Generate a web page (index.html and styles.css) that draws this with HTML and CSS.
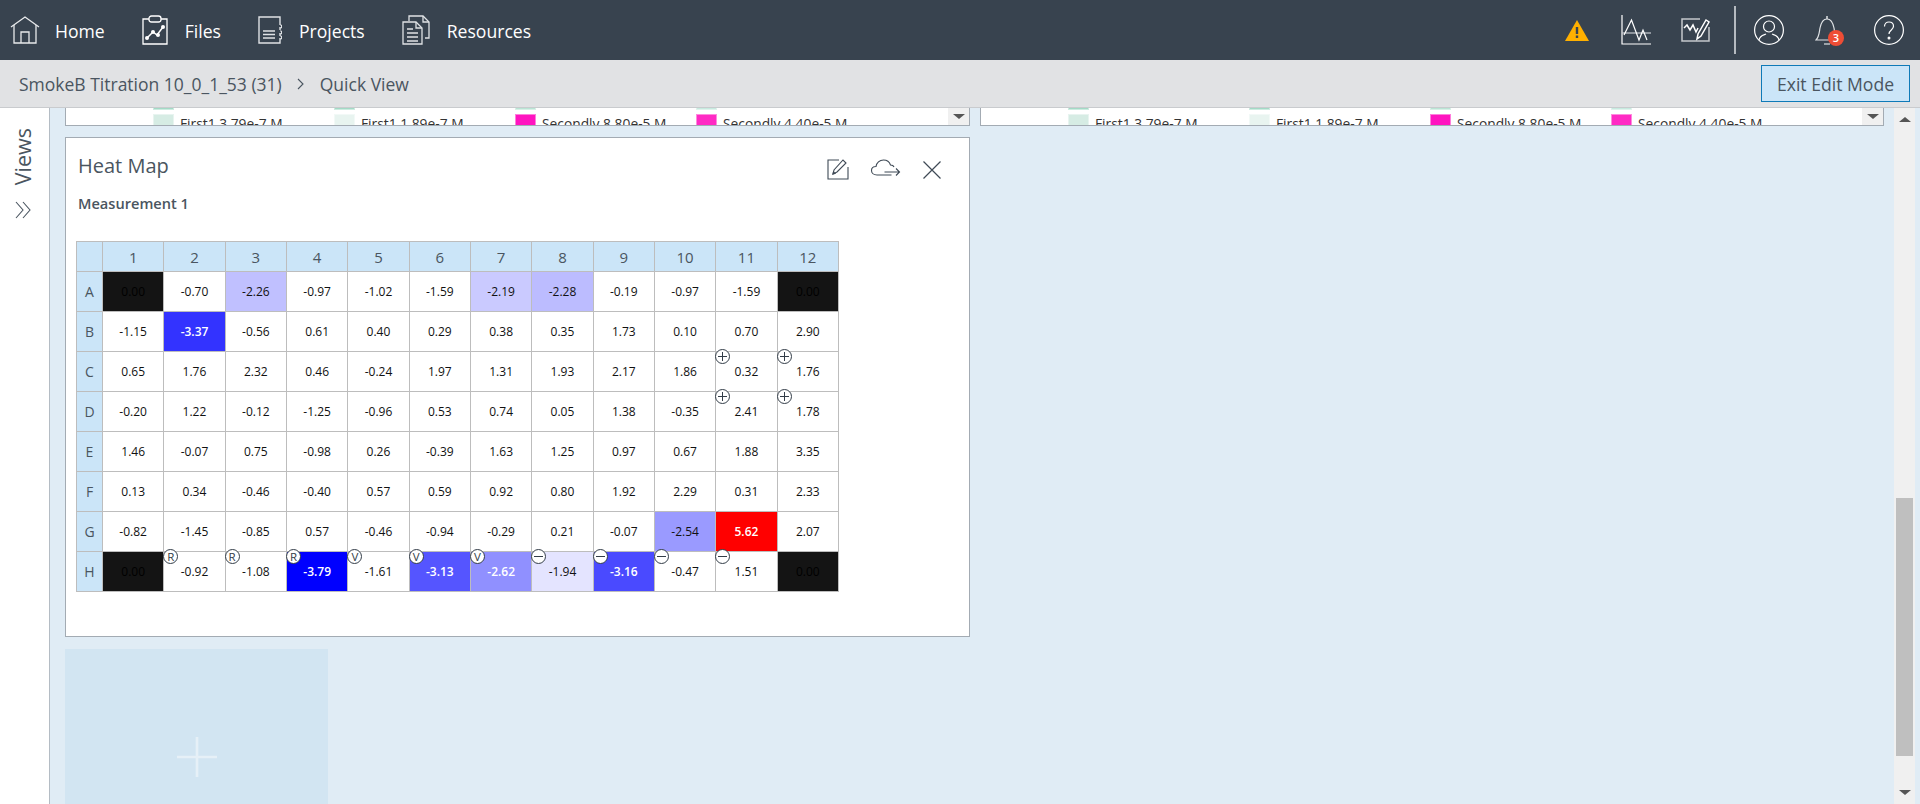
FILE: index.html
```html
<!DOCTYPE html>
<html lang="en">
<head>
<meta charset="utf-8">
<title>Quick View</title>
<link rel="stylesheet" href="styles.css">
</head>
<body>
<div class="app">
  <header class="topbar">
    <nav class="nav">
      <a class="nav-item">
        <svg class="ic-home" viewBox="0 0 30 28" fill="none" stroke="#e8eaec" stroke-width="1.3"><path d="M1 11 15 1l14 10"/><path d="M4 9v18h22V9"/><path d="M11 27V16h8v11"/></svg>
        <span>Home</span>
      </a>
      <a class="nav-item">
        <svg class="ic-files" viewBox="0 0 26 30" fill="none" stroke="#fff" stroke-width="1.3"><path d="M7 4H1v25h24V4h-6"/><rect x="7" y="1" width="12" height="6" rx="2.5"/><path d="M5 23l6-6 4 3 6-8" stroke-width="1.5"/><g fill="#fff" stroke="none"><circle cx="5" cy="23" r="2"/><circle cx="11" cy="17" r="2"/><circle cx="16" cy="20" r="2"/><circle cx="21" cy="12" r="2"/></g></svg>
        <span>Files</span>
      </a>
      <a class="nav-item">
        <svg class="ic-proj" viewBox="0 0 24 28" fill="none" stroke="#dfe2e5" stroke-width="1.4"><path d="M22 9V1H1v26h21v-5"/><path d="M22 11v3M22 17v3"/><path d="M5 15h12M5 18.500h12M5 22h12"/><path d="M22 9h1.500v3H22M22 15h1.500v3H22M22 20h1.500v3H22" stroke-width="1"/></svg>
        <span>Projects</span>
      </a>
      <a class="nav-item">
        <svg class="ic-res" viewBox="0 0 28 30" fill="none" stroke="#dfe2e5" stroke-width="1.3"><path d="M1 7h13l6 6v16H1z"/><path d="M14 7v6h6"/><path d="M7 6V1h14l6 6v16h-4"/><path d="M21 1v6h6"/><path d="M5 14h6M5 18h11M5 22h11M5 26h11"/></svg>
        <span>Resources</span>
      </a>
    </nav>
    <div class="tools">
      <svg class="ic-warn" viewBox="0 0 24 21"><path d="M12 0 24 21H0z" fill="#ffb000"/><rect x="10.800" y="7" width="2.400" height="7" fill="#38434f"/><rect x="10.800" y="15.500" width="2.400" height="2.500" fill="#38434f"/></svg>
      <svg class="ic-chart" viewBox="0 0 30 30" fill="none" stroke="#fff" stroke-width="1.2"><path d="M1 0v29h29"/><path d="M1 18h29" stroke="#c8ccd0"/><path d="M3 20 10.500 5 18 25l4-10 4 10"/></svg>
      <svg class="ic-edit-chart" viewBox="0 0 29 24" fill="none" stroke="#fff" stroke-width="1.200"><path d="M19 1H1v22h27V9" stroke="#c4c8cc" stroke-width="1.500"/><path d="M3 10l3-3 3 5 3-5 3 7 2-4" stroke-width="1.500"/><path d="M16 21l1-5 8-14 3 2-8 14z" fill="#38434f" stroke-width="1.500"/></svg>
      <span class="divider"></span>
      <svg class="ic-round" viewBox="0 0 30 30" fill="none" stroke="#fff" stroke-width="1.200"><circle cx="15" cy="15" r="14.400"/><circle cx="15" cy="11.500" r="5.500"/><path d="M5 25c1-5 5-5 7-6M25 25c-1-5-5-5-7-6"/></svg>
      <span class="bell">
        <svg class="ic-bell" viewBox="0 0 24 30" fill="none" stroke="#dfe2e5" stroke-width="1.200"><path d="M1 25c3-3 3-6 4-12 1-5 3-9 7-9s6 4 7 9c1 6 1 9 4 12z"/><path d="M12 1v3" stroke-width="1.500"/><path d="M9 29h6"/></svg>
        <span class="bell-badge">3</span>
      </span>
      <svg class="ic-round" viewBox="0 0 30 30" fill="none" stroke="#fff" stroke-width="1.200"><circle cx="15" cy="15" r="14.400"/><path d="M10.500 11.500c0-3 2-4.500 4.500-4.500s4.500 1.500 4.500 4.300c0 3.700-4.500 3.700-4.500 7.700"/><circle cx="15" cy="23" r=".9" fill="#fff"/></svg>
    </div>
  </header>

  <div class="crumbbar">
    <div class="crumbs">
      <span>SmokeB Titration 10_0_1_53 (31)</span>
      <svg class="crumb-sep" viewBox="0 0 7 12" fill="none" stroke="#4a5560" stroke-width="1.100"><path d="M1 1l5 5-5 5"/></svg>
      <span>Quick View</span>
    </div>
    <button class="exit-btn">Exit Edit Mode</button>
  </div>

  <div class="body">
    <aside class="side">
      <span class="side-title">Views</span>
      <svg class="side-chev" viewBox="0 0 16 18" fill="none" stroke="#4a5560" stroke-width="1.100"><path d="M1 1l7 8-7 8M8 1l7 8-7 8"/></svg>
    </aside>

    <main class="content">
      <div class="row-top">
        <section class="legend-card">
          <div class="legend">
            <i class="sw s1"></i><i class="sw s1"></i><i class="sw s2"></i><i class="sw s3"></i>
            <div class="lg"><i class="sw s4"></i><span>First1 3.79e-7 M</span></div>
            <div class="lg"><i class="sw s5"></i><span>First1 1.89e-7 M</span></div>
            <div class="lg"><i class="sw s6"></i><span>Secondly 8.80e-5 M</span></div>
            <div class="lg"><i class="sw s7"></i><span>Secondly 4.40e-5 M</span></div>
          </div>
          <span class="legend-arrow"><i class="tri-down"></i></span>
        </section>
        <section class="legend-card">
          <div class="legend">
            <i class="sw s1"></i><i class="sw s1"></i><i class="sw s2"></i><i class="sw s3"></i>
            <div class="lg"><i class="sw s4"></i><span>First1 3.79e-7 M</span></div>
            <div class="lg"><i class="sw s5"></i><span>First1 1.89e-7 M</span></div>
            <div class="lg"><i class="sw s6"></i><span>Secondly 8.80e-5 M</span></div>
            <div class="lg"><i class="sw s7"></i><span>Secondly 4.40e-5 M</span></div>
          </div>
          <span class="legend-arrow"><i class="tri-down"></i></span>
        </section>
      </div>

      <section class="heat-card">
        <div class="heat-head">
          <h2>Heat Map</h2>
          <div class="heat-tools">
            <svg class="ic-edit" viewBox="0 0 22 22" fill="none" stroke="#3f4a56" stroke-width="1.100"><path d="M12 2H1v19h20V9"/><path d="M6 16l1-4L16 2l3 3-9 9z"/><path d="M6 16l2-.500-1.500-1.500z" fill="#3f4a56"/></svg>
            <svg class="ic-cloud" viewBox="0 0 30 18" fill="none" stroke="#3f4a56" stroke-width="1.100"><path d="M21 16H6.500C3 16 1 14 1 11.500S3 7.500 5.500 7.500C6 4 9 1 13 1c3.500 0 6 2 7 5 1.500 0 3 .5 3.500 2"/><path d="M14 13h15M25.500 9.500 29 13l-3.500 3.500"/></svg>
            <svg class="ic-close" viewBox="0 0 18 18" fill="none" stroke="#3f4a56" stroke-width="1.200"><path d="M.5.5l17 17M17.500.5l-17 17"/></svg>
          </div>
        </div>
        <div class="heat-sub">Measurement 1</div>
        <table class="plate">
          <colgroup><col class="c-label"><col span="12"></colgroup>
          <thead>
            <tr><th></th><th>1</th><th>2</th><th>3</th><th>4</th><th>5</th><th>6</th><th>7</th><th>8</th><th>9</th><th>10</th><th>11</th><th>12</th></tr>
          </thead>
          <tbody>
            <tr><th>A</th><td class="k">0.00</td><td>-0.70</td><td class="b-226">-2.26</td><td>-0.97</td><td>-1.02</td><td>-1.59</td><td class="b-219">-2.19</td><td class="b-228">-2.28</td><td>-0.19</td><td>-0.97</td><td>-1.59</td><td class="k">0.00</td></tr>
            <tr><th>B</th><td>-1.15</td><td class="b-337">-3.37</td><td>-0.56</td><td>0.61</td><td>0.40</td><td>0.29</td><td>0.38</td><td>0.35</td><td>1.73</td><td>0.10</td><td>0.70</td><td>2.90</td></tr>
            <tr><th>C</th><td>0.65</td><td>1.76</td><td>2.32</td><td>0.46</td><td>-0.24</td><td>1.97</td><td>1.31</td><td>1.93</td><td>2.17</td><td>1.86</td><td><b class="mark plus"></b>0.32</td><td><b class="mark plus"></b>1.76</td></tr>
            <tr><th>D</th><td>-0.20</td><td>1.22</td><td>-0.12</td><td>-1.25</td><td>-0.96</td><td>0.53</td><td>0.74</td><td>0.05</td><td>1.38</td><td>-0.35</td><td><b class="mark plus"></b>2.41</td><td><b class="mark plus"></b>1.78</td></tr>
            <tr><th>E</th><td>1.46</td><td>-0.07</td><td>0.75</td><td>-0.98</td><td>0.26</td><td>-0.39</td><td>1.63</td><td>1.25</td><td>0.97</td><td>0.67</td><td>1.88</td><td>3.35</td></tr>
            <tr><th>F</th><td>0.13</td><td>0.34</td><td>-0.46</td><td>-0.40</td><td>0.57</td><td>0.59</td><td>0.92</td><td>0.80</td><td>1.92</td><td>2.29</td><td>0.31</td><td>2.33</td></tr>
            <tr><th>G</th><td>-0.82</td><td>-1.45</td><td>-0.85</td><td>0.57</td><td>-0.46</td><td>-0.94</td><td>-0.29</td><td>0.21</td><td>-0.07</td><td class="b-254">-2.54</td><td class="r-562">5.62</td><td>2.07</td></tr>
            <tr><th>H</th><td class="k">0.00</td><td><b class="mark">R</b>-0.92</td><td><b class="mark">R</b>-1.08</td><td class="b-379"><b class="mark">R</b>-3.79</td><td><b class="mark">V</b>-1.61</td><td class="b-313"><b class="mark">V</b>-3.13</td><td class="b-262"><b class="mark">V</b>-2.62</td><td class="b-194"><b class="mark minus"></b>-1.94</td><td class="b-316"><b class="mark minus"></b>-3.16</td><td><b class="mark minus"></b>-0.47</td><td><b class="mark minus"></b>1.51</td><td class="k">0.00</td></tr>
          </tbody>
        </table>
      </section>

      <div class="add-tile">
        <svg class="ic-plus" viewBox="0 0 40 40" stroke="#e6f0f7" stroke-width="2.600"><path d="M20 0v40M0 20h40"/></svg>
      </div>
    </main>

    <div class="scrollbar">
      <i class="tri-up"></i>
      <div class="track"><div class="thumb"></div></div>
      <i class="tri-down"></i>
    </div>
  </div>
</div>
</body>
</html>
```
FILE: styles.css
```css
* { box-sizing: border-box; }
html, body { margin: 0; height: 100%; overflow: hidden; }
body { font-family: "Open Sans", "Noto Sans", sans-serif; color: #4a5560; }
.app { height: 804px; display: flex; flex-direction: column; overflow: hidden; }

/* top bar */
.topbar { height: 60px; flex: none; background: #38434f; display: flex; align-items: center; justify-content: space-between; padding: 0 16px 0 10px; }
.nav { display: flex; align-items: center; gap: 37px; }
.nav-item { display: flex; align-items: center; gap: 17px; color: #fff; font-size: 17.6px; }
.nav-item:first-child { gap: 15px; }
.nav-item span { position: relative; top: 1px; }
.ic-home { width: 30px; height: 28px; }
.ic-files { width: 26px; height: 30px; }
.ic-proj { width: 24px; height: 28px; }
.ic-res { width: 28px; height: 30px; }
.tools { display: flex; align-items: center; }
.ic-warn { width: 24px; height: 21px; margin-right: 32px; }
.ic-chart { width: 30px; height: 30px; margin-right: 30px; }
.ic-edit-chart { width: 29px; height: 24px; margin-right: 24px; }
.divider { width: 2px; height: 48px; background: #b5bac0; margin-right: 18px; }
.ic-round { width: 30px; height: 30px; display: block; }
.bell { position: relative; width: 24px; height: 30px; margin: 0 35px 0 31px; }
.ic-bell { width: 24px; height: 30px; display: block; }
.bell-badge { position: absolute; left: 13px; top: 15px; width: 16px; height: 16px; border-radius: 50%; background: #ee4d35; color: #fff; font-size: 11px; font-weight: 600; line-height: 16px; text-align: center; }

/* breadcrumb */
.crumbbar { height: 48px; flex: none; background: #e1e2e4; border-bottom: 1px solid #c9cbce; display: flex; align-items: center; justify-content: space-between; padding: 0 10px 0 19px; }
.crumbs { display: flex; align-items: center; font-size: 17.5px; color: #4a5560; }
.crumb-sep { width: 7px; height: 12px; margin: 0 16px 0 15px; }
.exit-btn { width: 149px; height: 37px; padding: 0; background: #cbe5f8; border: 1px solid #0f7ab8; border-radius: 0; color: #4a5560; font: 17.6px "Open Sans", "Noto Sans", sans-serif; }

/* main */
.body { flex: 1; min-height: 0; display: flex; background: #e0ecf5; }
.side { width: 50px; flex: none; background: #fff; border-right: 1px solid #b4bcc4; display: flex; flex-direction: column; align-items: center; padding: 20px 4px 0 0; gap: 16px; }
.side-title { writing-mode: vertical-rl; transform: rotate(180deg); font-size: 21.5px; line-height: 24px; color: #4a5560; }
.side-chev { width: 16px; height: 18px; }
.content { width: 1844px; flex: none; padding: 0 10px 0 15px; overflow: hidden; }

/* clipped legend cards */
.row-top { display: flex; gap: 10px; }
.legend-card { position: relative; height: 18px; background: #fff; border: solid #a3abb3; border-width: 0 1px 1px; overflow: hidden; }
.legend-card:first-child { width: 905px; }
.legend-card:last-child { width: 904px; }
.legend { display: grid; grid-template-columns: repeat(4, 181px); row-gap: 4px; margin-top: -18px; padding-left: 87px; }
.legend > .sw { width: 21px; height: 20px; }
.lg { display: flex; gap: 6px; font-size: 13.8px; line-height: 20px; color: #333; }
.lg > .sw { width: 21px; height: 20px; flex: none; }
.sw { display: block; border: 1px solid rgba(255,255,255,.45); }
.s1 { background: #a3dac6; }
.s2 { background: #b9e4d4; }
.s3 { background: #c6eadf; }
.s4 { background: #d6ece4; }
.s5 { background: #e8f4f0; }
.s6 { background: #ff14c0; }
.s7 { background: #ff2ac4; }
.legend-arrow { position: absolute; right: 0; top: 0; width: 21px; height: 17px; background: #f0f0f0; display: flex; justify-content: center; padding-top: 6px; }
.tri-down { display: block; width: 0; height: 0; border: solid transparent; border-width: 5px 6px 0; border-top-color: #555; }
.tri-up { display: block; width: 0; height: 0; border: solid transparent; border-width: 0 6px 5px; border-bottom-color: #555; }

/* heat map */
.heat-card { width: 905px; height: 500px; margin-top: 11px; background: #fff; border: 1px solid #a3abb3; padding: 0 0 0 10px; }
.heat-head { display: flex; justify-content: space-between; padding: 13px 28px 0 2px; height: 56px; }
.heat-head h2 { margin: 0; font-size: 20px; font-weight: 400; line-height: 30px; color: #4a5560; }
.heat-tools { display: flex; align-items: flex-start; padding-top: 7px; }
.ic-edit { width: 22px; height: 22px; margin-right: 21px; }
.ic-cloud { width: 31px; height: 18px; margin: 1px 22px 0 0; }
.ic-close { width: 18px; height: 18px; margin-top: 3px; }
.heat-sub { padding-left: 2px; font-size: 14.6px; font-weight: 600; line-height: 20px; margin-top: -1px; color: #4a5560; }
.plate { width: 763px; margin-top: 28px; border-collapse: collapse; table-layout: fixed; }
.c-label { width: 26px; }
.plate th, .plate td { border: 1px solid #bdbdbd; padding: 0; text-align: center; }
.plate thead th { height: 30px; background: #cbe5f8; font-size: 15px; font-weight: 400; color: #4a5560; }
.plate tbody tr { height: 40px; }
.plate tbody th { background: #cbe5f8; font-size: 14px; font-weight: 400; color: #4a5560; }
.plate td { position: relative; font-size: 12px; color: #111; background: #fff; }
.plate td.k { background: #141414; color: #000; }
.plate td.b-226 { background: #c0c0ff; }
.plate td.b-219 { background: #cacaff; }
.plate td.b-228 { background: #bcbcff; }
.plate td.b-254 { background: #9a9aff; }
.plate td.b-194 { background: #e4e4ff; }
.plate td.b-337 { background: #3333ff; color: #fff; font-weight: 600; }
.plate td.b-379 { background: #0000ff; color: #fff; font-weight: 600; }
.plate td.b-313 { background: #5555ff; color: #fff; font-weight: 600; }
.plate td.b-316 { background: #4a4aff; color: #fff; font-weight: 600; }
.plate td.b-262 { background: #9090ff; color: #fff; font-weight: 600; }
.plate td.r-562 { background: #ff0000; color: #fff; font-weight: 600; }
.mark { position: absolute; left: -1px; top: -3px; z-index: 1; width: 15px; height: 15px; border: 1px solid #333d48; border-radius: 50%; background: #fff; color: #333d48; font-size: 11.5px; font-weight: 400; line-height: 13px; text-align: center; }
.plus::before, .plus::after, .minus::before { content: ""; position: absolute; background: #333d48; }
.plus::before, .minus::before { left: 2px; right: 2px; top: 6px; height: 1px; }
.plus::after { top: 2px; bottom: 2px; left: 6px; width: 1px; }

/* add tile */
.add-tile { width: 263px; height: 160px; margin-top: 12px; background: #d2e5f2; display: flex; justify-content: center; padding-top: 88px; }
.ic-plus { width: 40px; height: 40px; }

/* scrollbar */
.scrollbar { width: 21px; flex: none; background: #f0f0f0; display: flex; flex-direction: column; align-items: center; padding-top: 9px; }
.track { flex: 1; width: 17px; padding-top: 376px; }
.thumb { height: 258px; background: #bfbfbf; }
.scrollbar > .tri-down { margin-bottom: 9px; }
```
